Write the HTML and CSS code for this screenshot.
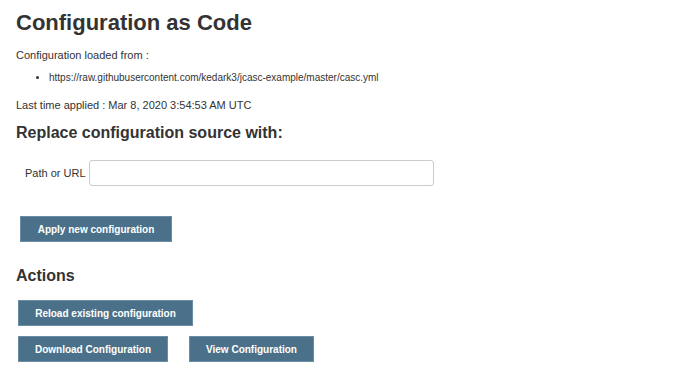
FILE: index.html
```html
<!doctype html>
<html lang="en-us">
	<head>
		<meta charset="utf-8">
		<title>Configuration as Code</title>
		<link rel="stylesheet" href="styles.css">
	</head>
	<body>
		<div class="main">
			<h1>Configuration as Code</h1>
			<p class="loaded-from">Configuration loaded from :</p>
			<ul class="sources">
				<li>https://raw.githubusercontent.com/kedark3/jcasc-example/master/casc.yml</li>
			</ul>
			<p>Last time applied : Mar 8, 2020 3:54:53 AM UTC</p>

			<h2>Replace configuration source with:</h2>
			<form class="replace-form">
				<div class="form-row">
					<label class="form-label" for="new-source">Path or URL</label>
					<input class="form-input" id="new-source" type="text">
				</div>
				<div class="form-buttons">
					<button class="btn btn-apply" type="button">Apply new configuration</button>
				</div>
			</form>

			<h2 class="actions-title">Actions</h2>
			<div class="actions">
				<div class="action-row">
					<button class="btn btn-reload" type="button">Reload existing configuration</button>
				</div>
				<div class="action-row">
					<button class="btn btn-download" type="button">Download Configuration</button>
					<button class="btn btn-view" type="button">View Configuration</button>
				</div>
			</div>
		</div>
	</body>
</html>
```

FILE: styles.css
```css
body {
	margin: 0;
	background: #fff;
	color: #333;
	font-family: "Liberation Sans", Arial, sans-serif;
	font-size: 11px;
}
.main {
	padding: 8px 16px;
}
h1 {
	font-size: 22px;
	font-weight: bold;
	margin: 0;
	line-height: 30px;
}
p {
	margin: 0;
	line-height: 16px;
}
.loaded-from {
	margin-top: 9px;
}
.sources {
	margin: 7px 0 11px;
	padding-left: 33px;
	font-size: 10px;
	line-height: 16px;
}
h2 {
	font-size: 16px;
	font-weight: bold;
	margin: 8px 0 0;
	line-height: 24px;
}
.replace-form {
	padding-top: 15px;
}
.form-row {
	display: flex;
	align-items: center;
	gap: 3px;
	padding-left: 9px;
}
.form-input {
	width: 345px;
	height: 26px;
	box-sizing: border-box;
	border: 1px solid #ccc;
	border-radius: 3px;
}
.form-buttons {
	padding: 30px 0 0 4px;
}
.btn {
	background: #4a7189;
	border: 1px solid #6a8da2;
	color: #fff;
	font-family: "Liberation Sans", Arial, sans-serif;
	font-size: 10px;
	font-weight: bold;
	height: 26px;
	padding: 0;
	white-space: nowrap;
	cursor: pointer;
}
.btn-apply {
	width: 152px;
}
.actions-title {
	margin-top: 22px;
}
.actions {
	padding: 12px 0 0 2px;
	display: flex;
	flex-direction: column;
	gap: 10px;
}
.action-row {
	display: flex;
	gap: 21px;
}
.btn-reload {
	width: 175px;
}
.btn-download {
	width: 150px;
}
.btn-view {
	width: 125px;
}
```
